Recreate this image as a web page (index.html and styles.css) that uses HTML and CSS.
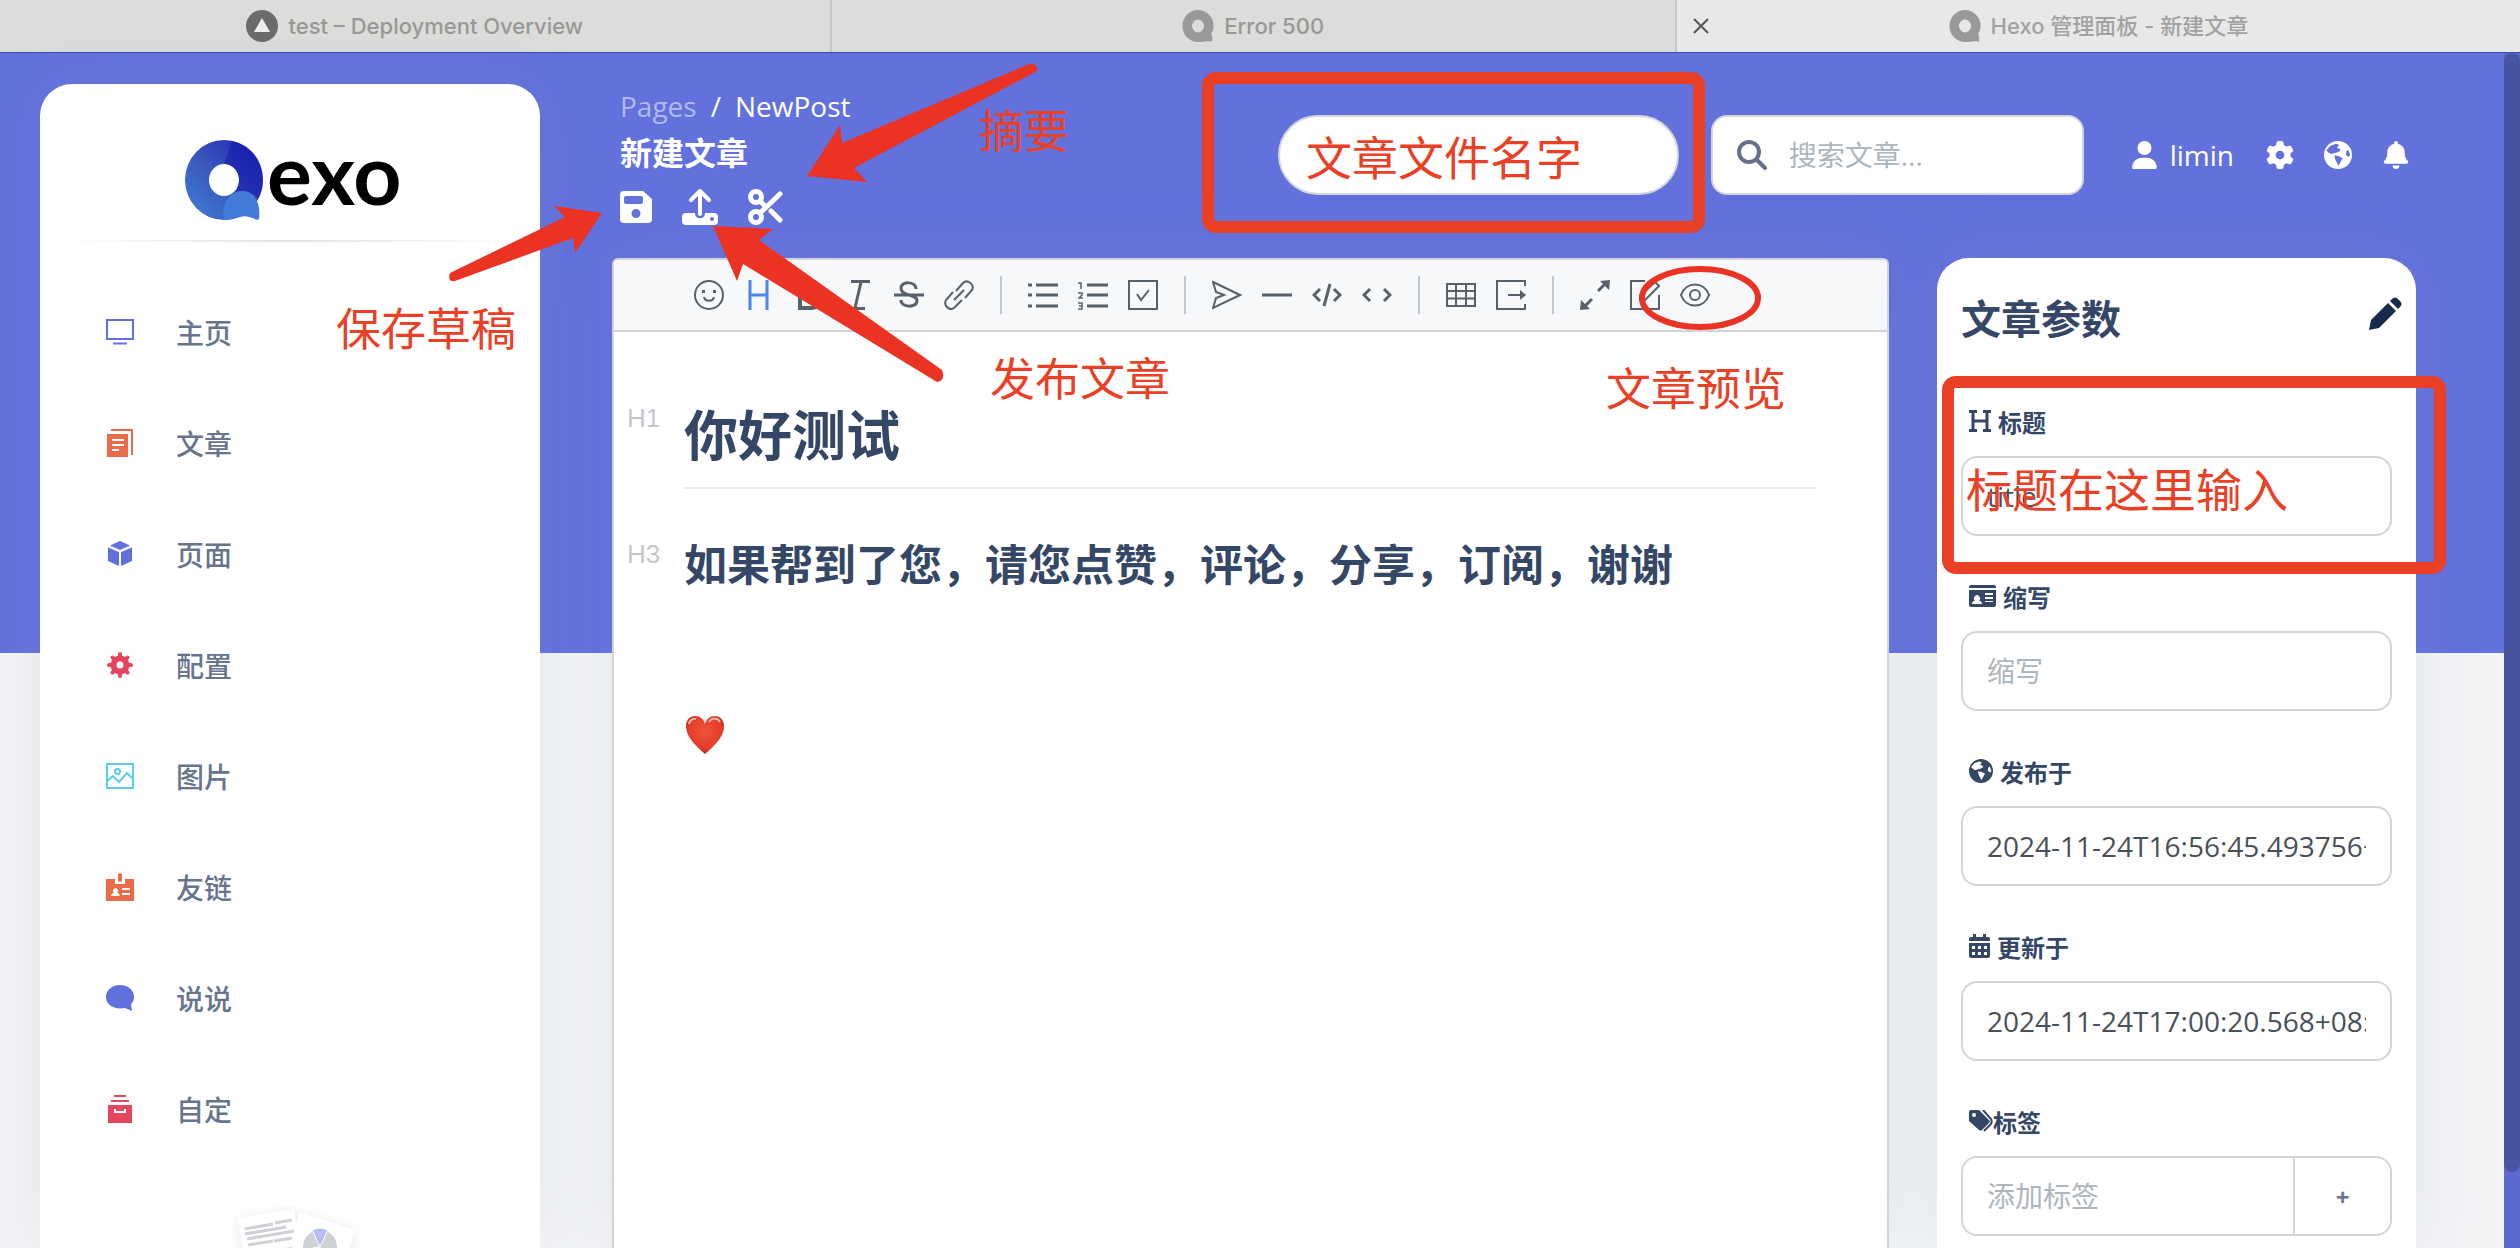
FILE: index.html
```html
<!DOCTYPE html>
<html lang="zh-CN">
<head>
    <meta charset="UTF-8">
    <meta name="viewport" content="width=device-width, initial-scale=1.0">
    <title>Hexo 管理面板 - 新建文章</title>
    <link rel="stylesheet" href="styles.css">
</head>
<body>
    <!-- shared icons -->
    <svg width="0" height="0" class="defs" aria-hidden="true">
        <linearGradient id="qRing" x1="0" y1="1" x2="1" y2="0">
            <stop offset="0" stop-color="#3f80d2"/>
            <stop offset="0.5" stop-color="#3a55bd"/>
            <stop offset="1" stop-color="#1a1fb0"/>
        </linearGradient>
        <symbol id="i-globe" viewBox="0 0 30 30">
            <path fill-rule="evenodd" d="M15 0a15 15 0 1 0 0 30a15 15 0 1 0 0-30zM2.500 10L7 5l6-2l3 1l-2 3.500l3.500 1l-.5 2.500l-4 1.500l-2.500 .5l-3 1l-3-2zM11 15.500l4.500 .5l4.500 2.500l-2 3.500l-2.500 4.500l-1.500-3l-2-4zM24 11l2-1.500l2 5.500l-1.500 2l-3-2z"/>
        </symbol>
        <symbol id="i-q" viewBox="0 0 78 80">
            <path fill-rule="evenodd" d="M39 0a39 40 0 1 0 0 80c12 0 20-4 35-1c2-8 0-15-2-20c4-6 6-12 6-19a39 40 0 0 0-39-40zM39 24a15 16 0 1 1 0 32a15 16 0 1 1 0-32z"/>
        </symbol>
    </svg>

    <div class="tabs">
        <div class="tab">
            <svg class="fav" viewBox="0 0 32 32"><circle cx="16" cy="16" r="16" fill="#6b6b6b"/><path d="M16 8l8 14H8z" fill="#efefef"/></svg>
            <span>test – Deployment Overview</span>
        </div>
        <div class="tab">
            <svg class="fav" fill="#999"><use href="#i-q"/></svg>
            <span>Error 500</span>
        </div>
        <div class="tab active">
            <button class="close" aria-label="关闭"><svg width="16" height="16" viewBox="0 0 16 16" stroke="#555" stroke-width="2"><path d="M1 1l14 14M15 1L1 15"/></svg></button>
            <svg class="fav" fill="#999"><use href="#i-q"/></svg>
            <span>Hexo 管理面板 - 新建文章</span>
        </div>
    </div>

    <div class="viewport">
        <aside class="sidebar">
            <a class="logo" href="#">
                <svg width="78" height="80" viewBox="0 0 78 80">
                    <path fill="url(#qRing)" fill-rule="evenodd" d="M39 0a39 40 0 1 0 0 80a39 40 0 1 0 0-80zM39 24a15 16 0 1 1 0 32a15 16 0 1 1 0-32z"/>
                    <path fill="#1217aa" d="M54 40c0-9-6-16-15-16l8-23c19 4 31 19 31 39c0 8-2 14-5 19c-3-5-9-8-17-8c-3 0-5 1-7 2c3-3 5-8 5-13z" opacity=".55"/>
                    <path fill="#427bd9" d="M39 80c-3-10 2-29 18-29c13 0 19 13 17 28c-3 3-9-5-19-2c-6 2-10 3-16 3z"/>
                </svg>
                <span>exo</span>
            </a>
            <hr>
            <nav>
                <a href="#"><svg viewBox="0 0 28 28" fill="none" stroke="#6070dc" stroke-width="2"><rect x="1" y="2" width="26" height="19"/><path d="M7 25.500h14"/></svg>主页</a>
                <a href="#"><svg viewBox="0 0 28 28" fill="#ea6b49"><path d="M5 0h22v26h-2V2H5z"/><path fill-rule="evenodd" d="M1 5h21v23H1zM6 10v2h12v-2zM6 15v2h12v-2zM6 20v2h7v-2z"/></svg>文章</a>
                <a href="#"><svg viewBox="0 0 28 28" fill="#6070dc"><path d="M14 1l10 4.500L14 10L4 5.500zM2 7.500l11 4.500v14L2 21zM26 7.500L15 12v14l11-5z"/></svg>页面</a>
                <a href="#"><svg viewBox="0 0 28 28" stroke="#e5465f" stroke-linecap="round"><circle cx="14" cy="14" r="6.500" fill="none" stroke-width="6"/><path stroke-width="4" d="M14 3v3M14 22v3M3 14h3M22 14h3M6.500 6.500l2 2M19.500 19.500l2 2M21.500 6.500l-2 2M8.500 19.500l-2 2"/></svg>配置</a>
                <a href="#"><svg viewBox="0 0 28 28" fill="none" stroke="#5ccbee" stroke-width="2"><rect x="1" y="2" width="26" height="24"/><circle cx="11.500" cy="9.500" r="2.500"/><path d="M1 19l6-5l6 6l8-9l6 6"/></svg>图片</a>
                <a href="#"><svg viewBox="0 0 28 28" fill="#ea6b49"><rect x="12" y="0" width="4" height="9" rx="2"/><path fill-rule="evenodd" d="M0 6h9v5h10V6h9v22H0zM16 15v2h8v-2zM16 20v2h8v-2zM5 23h9c0-2-2-3-3-3.300a2.500 2.500 0 1 0-3 0c-1 .3-3 1.300-3 3.300z"/></svg>友链</a>
                <a href="#"><svg viewBox="0 0 28 28" fill="#6070dc"><path d="M14 1c8 0 14 5 14 12c0 3-1 5-3 7l1 7l-7-3c-11 2-19-3-19-11C0 6 6 1 14 1z"/></svg>说说</a>
                <a href="#"><svg viewBox="0 0 28 28" fill="#e5465f"><path d="M8 0h12v2H8zM5 5h18v2H5z"/><path fill-rule="evenodd" d="M2 10h24v18H2zM8 14v4h12v-4h-2v2h-8v-2z"/></svg>自定</a>
            </nav>
            <svg class="docs" viewBox="0 0 160 80" width="160" height="80">
                <g fill="#fff" class="sheet"><path d="M38 12l56-9l12 77H48z"/><path d="M99 6l56 18l-18 60H80z"/></g>
                <g stroke="#d0d1d6" stroke-width="3"><path d="M45 23l28-5M75 17l17-3M45 28l41-7M47 33l47-8M48 39l25-4M74 35l18-3"/></g>
                <path fill="#d0d1d6" d="M60 43l7-1v38h-7zM86 42l6-1v39h-6z"/>
                <circle cx="120" cy="41" r="17" fill="#d0d1d6"/>
                <path d="M120 41l-8-17q8-4 16 0z" fill="#b7bdf2" stroke="#fff" stroke-width="1"/>
                <path d="M120 41l-17 4" stroke="#fff" stroke-width="2"/>
            </svg>
        </aside>

        <main>
            <header class="topbar">
                <div class="heading">
                    <div class="crumbs"><a href="#">Pages</a><span>/</span><span>NewPost</span></div>
                    <h2>新建文章</h2>
                    <div class="actions">
                        <button aria-label="保存草稿"><svg width="32" height="32" viewBox="0 0 32 32" fill="#fff"><path fill-rule="evenodd" d="M4 0h19l9 8v20a4 4 0 0 1-4 4H4a4 4 0 0 1-4-4V4a4 4 0 0 1 4-4zM6 5a2 2 0 0 0-2 2v4a2 2 0 0 0 2 2h15a2 2 0 0 0 2-2V7a2 2 0 0 0-2-2zM16 18a4.500 4.500 0 1 0 0 9a4.500 4.500 0 1 0 0-9z"/></svg></button>
                        <button aria-label="发布文章"><svg width="36" height="36" viewBox="0 0 36 36"><g fill="none" stroke="#fff" stroke-width="4" stroke-linecap="round" stroke-linejoin="round"><path d="M18 25V3M9 11l9-9l9 9"/></g><path fill="#fff" fill-rule="evenodd" d="M4 24h9c0 7 10 7 10 0h9a4 4 0 0 1 4 4v4a4 4 0 0 1-4 4H4a4 4 0 0 1-4-4v-4a4 4 0 0 1 4-4zM30 28a2 2 0 1 0 0 4a2 2 0 1 0 0-4z"/></svg></button>
                        <button aria-label="摘要"><svg width="36" height="36" viewBox="0 0 36 36" fill="none" stroke="#fff" stroke-width="5" stroke-linecap="round"><circle cx="8" cy="8" r="5.500"/><circle cx="8" cy="28" r="5.500"/><path d="M12 24L32 5M13 13l4 4M23 22l9 9"/></svg></button>
                    </div>
                </div>
                <div class="controls">
                    <input class="filename" type="text" aria-label="文件名">
                    <div class="search">
                        <svg width="30" height="30" viewBox="0 0 30 30" fill="none" stroke="#66708c" stroke-width="4" stroke-linecap="round"><circle cx="12" cy="12" r="10"/><path d="M20 20l8 8"/></svg>
                        <input type="text" placeholder="搜索文章..." aria-label="搜索文章">
                    </div>
                    <a class="user" href="#"><svg width="25" height="28" viewBox="0 0 448 512"><path d="M224 256A128 128 0 1 0 224 0a128 128 0 1 0 0 256zm-45.700 48C79.800 304 0 383.800 0 482.300C0 498.700 13.300 512 29.700 512H418.300c16.400 0 29.700-13.300 29.700-29.700C448 383.800 368.200 304 269.700 304H178.300z"/></svg>limin</a>
                    <div class="icons">
                        <button aria-label="设置"><svg width="28" height="28" viewBox="0 0 512 512"><path d="M495.900 166.600c3.200 8.700 .5 18.400-6.400 24.600l-43.300 39.400c1.100 8.300 1.700 16.800 1.700 25.400s-.6 17.100-1.700 25.400l43.300 39.400c6.900 6.200 9.600 15.900 6.400 24.600c-4.400 11.900-9.700 23.300-15.800 34.300l-4.700 8.100c-6.600 11-14 21.400-22.100 31.200c-5.900 7.200-15.700 9.600-24.500 6.800l-55.700-17.700c-13.400 10.300-28.200 18.900-44 25.400l-12.500 57.100c-2 9.100-9 16.300-18.200 17.800c-13.800 2.300-28 3.500-42.500 3.500s-28.700-1.200-42.500-3.500c-9.200-1.500-16.200-8.700-18.200-17.800l-12.500-57.100c-15.800-6.500-30.600-15.100-44-25.400L83.100 425.900c-8.800 2.800-18.600 .3-24.500-6.800c-8.100-9.800-15.500-20.200-22.100-31.200l-4.700-8.100c-6.100-11-11.400-22.400-15.800-34.300c-3.200-8.700-.5-18.400 6.400-24.600l43.300-39.400C64.600 273.100 64 264.600 64 256s.6-17.100 1.700-25.400L22.400 191.200c-6.900-6.200-9.600-15.900-6.400-24.600c4.400-11.900 9.700-23.300 15.800-34.300l4.700-8.100c6.600-11 14-21.400 22.100-31.200c5.900-7.200 15.700-9.600 24.500-6.800l55.700 17.700c13.400-10.300 28.200-18.900 44-25.400l12.500-57.100c2-9.100 9-16.300 18.200-17.800C227.300 1.200 241.500 0 256 0s28.700 1.200 42.500 3.500c9.200 1.500 16.200 8.700 18.200 17.800l12.500 57.100c15.800 6.500 30.600 15.100 44 25.400l55.700-17.700c8.800-2.800 18.600-.3 24.500 6.800c8.100 9.800 15.500 20.200 22.100 31.200l4.700 8.100c6.100 11 11.400 22.400 15.800 34.300zM256 336a80 80 0 1 0 0-160 80 80 0 1 0 0 160z"/></svg></button>
                        <button aria-label="语言"><svg width="28" height="28"><use href="#i-globe"/></svg></button>
                        <button aria-label="通知"><svg width="28" height="28" viewBox="-32 0 512 512"><path d="M224 0c-17.700 0-32 14.300-32 32V51.200C119 66 64 130.600 64 208v18.800c0 47-17.300 92.400-48.500 127.600l-7.400 8.300c-8.400 9.400-10.400 22.900-5.300 34.400S19.400 416 32 416H416c12.600 0 24-7.400 29.200-18.900s3.100-25-5.300-34.400l-7.400-8.300C401.300 319.200 384 273.900 384 226.800V208c0-77.400-55-142-128-156.800V32c0-17.700-14.300-32-32-32zm45.300 493.300c12-12 18.700-28.300 18.700-45.300H224 160c0 17 6.700 33.300 18.700 45.300s28.300 18.700 45.300 18.700s33.300-6.700 45.300-18.700z"/></svg></button>
                    </div>
                </div>
            </header>

            <div class="columns">
                <section class="editor">
                    <div class="toolbar">
                        <button aria-label="表情"><svg viewBox="0 0 30 30"><circle cx="15" cy="15" r="14"/><path d="M10 17c1 5 9 5 10 0"/><path class="solid" d="M8 10h3v3H8zM19 10h3v3h-3z"/></svg></button>
                        <button class="on" aria-label="标题"><svg viewBox="0 0 30 30"><path stroke-width="3" d="M6 0v30M23 0v30M6 15h17"/></svg></button>
                        <button aria-label="粗体"><svg viewBox="0 0 30 30"><path stroke-width="4" d="M6 2h11a6 6 0 0 1 0 12H6zM6 14h12a7 7 0 0 1 0 14H6z"/></svg></button>
                        <button aria-label="斜体"><svg viewBox="0 0 30 30"><path stroke-width="3" d="M7 1.500h19M4 28.500h17M17 2l-6 26"/></svg></button>
                        <button aria-label="删除线"><svg viewBox="0 0 30 30"><path stroke-width="3" d="M0 15h30M22 9c0-8-15-8-15-1c0 4 4 6 8 7s8 2 8 6c0 7-16 7-16-1"/></svg></button>
                        <button aria-label="链接"><svg viewBox="0 0 30 30"><path d="M12 11l7-8c4-4 12 1 9 7l-7 8M9 12l-7 8c-3 6 4 11 8 8l8-8M10 20L20 10"/></svg></button>
                        <i></i>
                        <button aria-label="列表"><svg viewBox="0 0 30 30"><path stroke-width="3" d="M8 5h22M8 15h22M8 26h22M0 5h4M0 15h4M0 26h4"/></svg></button>
                        <button aria-label="有序列表"><svg viewBox="0 0 30 30"><path stroke-width="3" d="M9 5h21M9 15h21M9 26h21"/><path stroke-width="1.500" d="M0 3h3v6M0 13h4v2l-3 3h4M0 23h4v6H0M1 26h3"/></svg></button>
                        <button aria-label="任务列表"><svg viewBox="0 0 30 30"><path d="M1 1h28v28H1zM9 14l4 6l8-10"/></svg></button>
                        <i></i>
                        <button aria-label="引用"><svg viewBox="0 0 30 30"><path d="M1 2l27 13L1 28l3-10l8-3l-8-3z"/></svg></button>
                        <button aria-label="分隔线"><svg viewBox="0 0 30 30"><path stroke-width="3" d="M0 15h30"/></svg></button>
                        <button aria-label="代码块"><svg viewBox="0 0 30 30"><path stroke-width="3" d="M8 9l-6 6l6 6M22 9l6 6l-6 6M18 4l-6 22"/></svg></button>
                        <button aria-label="行内代码"><svg viewBox="0 0 30 30"><path stroke-width="3" d="M8 9l-6 6l6 6M22 9l6 6l-6 6"/></svg></button>
                        <i></i>
                        <button aria-label="表格"><svg viewBox="0 0 30 30"><path d="M1 4h28v22H1zM1 11h28M1 18.500h28M10 4v22M20 4v22"/></svg></button>
                        <button aria-label="导出"><svg viewBox="0 0 30 30"><path d="M29 6V1H1v28h28v-5M12 15h15"/><path class="solid" d="M24 10l6 5l-6 5z"/></svg></button>
                        <i></i>
                        <button aria-label="全屏"><svg viewBox="0 0 30 30"><path stroke-width="3" d="M18 11l8-8M12 19l-8 8"/><path class="solid" d="M20 1l10-1l-1 10zM0 30l1-10l9 9z"/></svg></button>
                        <button aria-label="编辑"><svg viewBox="0 0 30 30"><path d="M15 1H1v28h28V15M10 16L25 2l4 4l-14 14h-5z"/></svg></button>
                        <button aria-label="预览"><svg viewBox="0 0 30 30"><path d="M1 15C6 1 24 1 29 15C24 29 6 29 1 15z"/><ellipse cx="15" cy="15" rx="5" ry="5"/></svg></button>
                    </div>
                    <div class="content">
                        <div class="row"><span class="marker">H1</span><h1>你好测试</h1></div>
                        <div class="row"><span class="marker">H3</span><h3>如果帮到了您，请您点赞，评论，分享，订阅，谢谢</h3></div>
                        <svg class="heart" width="40" height="40" viewBox="0 0 40 40">
                            <radialGradient id="heartFill" cx=".5" cy=".4" r=".65"><stop offset="0" stop-color="#f0543c"/><stop offset=".7" stop-color="#e23c2a"/><stop offset="1" stop-color="#a81c14"/></radialGradient>
                            <path fill="url(#heartFill)" d="M20 39C10 30 1 22 1 11C1 5 5 1 10 1c5 0 9 3 10 8c1-5 5-8 10-8c5 0 9 4 9 10c0 11-9 19-19 28z"/>
                            <path fill="none" stroke="#f9b3a8" stroke-width="2" d="M4 9c1-4 4-6 7-5M24 7c2-4 8-5 11 0"/>
                        </svg>
                    </div>
                </section>

                <form class="panel">
                    <div class="panel-head">
                        <h2>文章参数</h2>
                        <button type="button" aria-label="编辑参数"><svg width="34" height="34" viewBox="0 0 34 34" fill="#172b4d"><path d="M20 6l8 8L11 31L1 33l2-10zM22 4l2-2c2-2 4-2 6 0l2 2c2 2 2 4 0 6l-2 2z"/></svg></button>
                    </div>
                    <div class="field">
                        <label for="title"><svg width="22" height="22" viewBox="0 0 22 22" fill="none" stroke="#344767" stroke-width="3"><path d="M0 1.500h8M14 1.500h8M0 20.500h8M14 20.500h8M4 2v18M18 2v18M4 11h14"/></svg>标题</label>
                        <input id="title" type="text" value="title">
                    </div>
                    <div class="field">
                        <label for="abbr"><svg width="27" height="22" viewBox="0 0 27 22" fill="#344767"><path d="M2 0h23a2 2 0 0 1 2 2v1H0V2a2 2 0 0 1 2-2z"/><path fill-rule="evenodd" d="M0 5h27v15a2 2 0 0 1-2 2H2a2 2 0 0 1-2-2zM16 8v2h8V8zM16 12v2h8v-2zM16 16v1h8v-1zM3 19h10c0-2-1-3-3-3.500a3 3 0 1 0-4 0c-2 .5-3 1.500-3 3.500z"/></svg>缩写</label>
                        <input id="abbr" type="text" placeholder="缩写">
                    </div>
                    <div class="field">
                        <label for="published"><svg width="24" height="24" fill="#344767"><use href="#i-globe"/></svg>发布于</label>
                        <input id="published" type="text" value="2024-11-24T16:56:45.493756+08:00">
                    </div>
                    <div class="field">
                        <label for="updated"><svg width="21" height="24" viewBox="0 0 21 24" fill="#344767"><path d="M2 3h2V0h3v3h7V0h3v3h2a2 2 0 0 1 2 2v2H0V5a2 2 0 0 1 2-2z"/><path fill-rule="evenodd" d="M0 9h21v13a2 2 0 0 1-2 2H2a2 2 0 0 1-2-2zM3 12v3h3v-3zM9 12v3h3v-3zM15 12v3h3v-3zM3 18v3h3v-3zM9 18v3h3v-3zM15 18v3h3v-3z"/></svg>更新于</label>
                        <input id="updated" type="text" value="2024-11-24T17:00:20.568+08:00">
                    </div>
                    <div class="field">
                        <label class="tight" for="tag"><svg width="24" height="22" viewBox="0 0 24 22" fill="#344767"><path fill-rule="evenodd" d="M2 0h8l10 10c1 1 1 2 0 3l-7 7c-1 1-2 1-3 0L0 11V2a2 2 0 0 1 2-2zM5 3a2 2 0 1 0 0 4a2 2 0 1 0 0-4z"/><path fill="none" stroke="#344767" stroke-width="2" d="M14 0l8 9c1 2 1 3 0 5l-7 7"/></svg>标签</label>
                        <div class="group">
                            <input id="tag" type="text" placeholder="添加标签">
                            <button type="button">+</button>
                        </div>
                    </div>
                </form>
            </div>
        </main>
        <div class="scrollbar"><div class="thumb"></div></div>
    </div>

    <!-- hand-drawn notes on top of the page -->
    <div class="notes">
        <svg width="2520" height="1248" viewBox="0 0 2520 1248">
            <g fill="#ea3323">
                <path d="M602 213l-48-7l11 11L450 273q-3 9 5 8L573 238l2 15z"/>
                <path d="M807 176l33-51l2 18L1029 64q9-1 8 7L854 168l13 14z"/>
                <path d="M713 226l60 3l-14 11L942 370q4 10-5 12L743 264l-6 17z"/>
            </g>
            <ellipse cx="1700" cy="298" rx="58" ry="29" fill="none" stroke="#ea3323" stroke-width="6"/>
        </svg>
        <div class="frame frame-file"></div>
        <div class="frame frame-title"></div>
        <span class="note note-save">保存草稿</span>
        <span class="note note-summary">摘要</span>
        <span class="note note-publish">发布文章</span>
        <span class="note note-preview">文章预览</span>
        <span class="note note-file">文章文件名字</span>
        <span class="note note-title">标题在这里输入</span>
    </div>
</body>
</html>
```
FILE: styles.css
```css
* {
    box-sizing: border-box;
}
body {
    margin: 0;
    height: 100vh;
    overflow: hidden;
    position: relative;
    display: flex;
    flex-direction: column;
    font-family: "Open Sans", "Noto Sans CJK SC", sans-serif;
    font-size: 28px;
    color: #344767;
    background: #f3f4f6;
}
h1, h2, h3 {
    margin: 0;
    font-weight: 700;
}
a {
    color: inherit;
    text-decoration: none;
}
button {
    padding: 0;
    border: none;
    background: none;
    font: inherit;
    color: inherit;
    cursor: pointer;
}
svg {
    display: block;
    flex: none;
}
.defs {
    position: absolute;
}

/* browser tabs */
.tabs {
    display: flex;
    height: 53px;
    flex: none;
    border-bottom: 1px solid #3a4bb8;
    background: #dcdcda;
    font-family: Inter, "Noto Sans CJK SC", sans-serif;
    font-size: 22px;
    font-weight: 500;
    line-height: 32px;
    color: #989896;
}
.tab {
    flex: 1;
    display: flex;
    align-items: center;
    justify-content: center;
    gap: 10px;
    position: relative;
    border-right: 2px solid #c6c6c4;
}
.tab:first-child {
    flex: 0 0 33%;
}
.tab.active {
    background: #e8e8e8;
    border-right: none;
    color: #a2a2a2;
}
.fav {
    width: 32px;
    height: 32px;
}
.close {
    position: absolute;
    left: 16px;
}

/* page */
.viewport {
    flex: 1;
    min-height: 0;
    display: flex;
    background: linear-gradient(#6371dd 600px, #f3f4f6 600px);
}
.sidebar {
    width: 500px;
    flex: none;
    margin: 31px 72px 0 40px;
    border-radius: 32px 32px 0 0;
    background: #fff;
    box-shadow: 0 0 64px rgba(136, 152, 170, 0.15);
    overflow: hidden;
}
.logo {
    display: flex;
    align-items: flex-start;
    gap: 4px;
    height: 80px;
    margin: 56px 0 20px 145px;
    font-family: Lato, sans-serif;
    font-size: 84px;
    font-weight: 700;
    line-height: 66px;
    color: #000;
}
.sidebar hr {
    height: 2px;
    margin: 0 24px;
    border: none;
    background: linear-gradient(90deg, #fff, #e2e2e2, #fff);
}
.sidebar nav {
    padding-top: 34px;
}
.sidebar nav a {
    display: flex;
    align-items: center;
    gap: 42px;
    height: 111px;
    padding-left: 66px;
    font-weight: 500;
    color: #67748e;
}
.sidebar nav svg {
    width: 28px;
    height: 28px;
}
.docs {
    margin: 42px auto 0 160px;
}
.sheet {
    filter: drop-shadow(0 2px 6px rgba(0, 0, 0, 0.1));
}
main {
    flex: 1;
    min-width: 0;
    margin-right: 88px;
    display: flex;
    flex-direction: column;
}

/* top bar */
.topbar {
    display: flex;
    align-items: center;
    justify-content: space-between;
    height: 205px;
    flex: none;
    padding: 0 6px 2px 8px;
    color: #fff;
}
.crumbs {
    display: flex;
    gap: 14px;
    line-height: 42px;
}
.crumbs a {
    color: #b1b8ee;
}
.heading h2 {
    margin: 4px 0 14px;
    font-size: 32px;
    line-height: 44px;
}
.actions {
    display: flex;
    align-items: center;
    gap: 30px;
}
.controls, .user, .icons {
    display: flex;
    align-items: center;
}
.controls svg {
    fill: #fff;
}
.filename, .search {
    height: 80px;
    border: 2px solid #d2d6da;
    background: #fff;
}
.filename {
    width: 401px;
    margin-right: 32px;
    padding: 0 24px;
    border-radius: 40px;
    font: inherit;
}
.search {
    display: flex;
    align-items: center;
    gap: 22px;
    width: 373px;
    margin-right: 48px;
    padding: 0 24px;
    border-radius: 16px;
}
.controls .search svg {
    fill: none;
}
.search input {
    width: 100%;
    padding: 0;
    border: none;
    outline: none;
    font: inherit;
}
input::placeholder {
    color: #adb5bd;
    opacity: 1;
}
.user {
    gap: 13px;
    margin-right: 32px;
}
.icons {
    gap: 30px;
}

/* editor */
.columns {
    flex: 1;
    min-height: 0;
    display: flex;
    gap: 48px;
}
.editor {
    flex: 1;
    min-width: 0;
    border: 2px solid #d1d5da;
    border-bottom: none;
    border-radius: 6px 6px 0 0;
    background: #fff;
    box-shadow: 0 0 64px rgba(136, 152, 170, 0.15);
}
.toolbar {
    display: flex;
    align-items: center;
    height: 72px;
    padding-left: 70px;
    border-bottom: 2px solid #d1d5da;
    border-radius: 4px 4px 0 0;
    background: #f6f8fa;
    color: #586069;
}
.toolbar button {
    padding: 0 10px;
}
.toolbar .on {
    color: #4c85f0;
}
.toolbar svg {
    width: 30px;
    height: 30px;
    fill: none;
    stroke: currentColor;
    stroke-width: 2;
}
.toolbar .solid {
    fill: currentColor;
    stroke: none;
}
.toolbar i {
    width: 2px;
    height: 38px;
    margin: 0 16px;
    background: #c4c7cc;
}
.content {
    padding: 67px 70px 0 13px;
}
.row {
    display: flex;
    margin-bottom: 46px;
}
.marker {
    width: 57px;
    flex: none;
    font-family: "Liberation Sans", sans-serif;
    font-size: 26px;
    line-height: 38px;
    color: #c6c7cc;
}
.row h1 {
    flex: 1;
    padding-bottom: 16px;
    border-bottom: 2px solid #eaecef;
    font-size: 54px;
    line-height: 72px;
}
.row h3 {
    font-size: 43px;
    line-height: 60px;
    white-space: nowrap;
}
.heart {
    margin: 120px 0 0 58px;
}

/* article settings */
.panel {
    width: 479px;
    flex: none;
    padding: 30px 24px 0;
    border-radius: 32px 32px 0 0;
    background: #fff;
    box-shadow: 0 0 64px rgba(136, 152, 170, 0.15);
    overflow: hidden;
}
.panel-head {
    display: flex;
    align-items: center;
    justify-content: space-between;
    height: 58px;
    margin-bottom: 56px;
    padding-right: 6px;
}
.panel-head button {
    align-self: flex-start;
    padding-top: 9px;
    margin-right: -16px;
}
.panel-head h2 {
    font-size: 40px;
}
.field {
    margin-bottom: 41px;
}
.field label {
    display: flex;
    align-items: center;
    gap: 7px;
    height: 38px;
    margin-bottom: 16px;
    padding-left: 8px;
    font-size: 24px;
    font-weight: 700;
}
.field .tight {
    gap: 0;
}
.field input {
    width: 100%;
    height: 80px;
    padding: 0 24px;
    border: 2px solid #d2d6da;
    border-radius: 16px;
    background: #fff;
    font: inherit;
    color: #495057;
}
.group {
    display: flex;
}
.field .group input {
    flex: 1;
    min-width: 0;
    border-right: none;
    border-radius: 16px 0 0 16px;
}
.group button {
    width: 99px;
    border: 2px solid #d2d6da;
    border-radius: 0 16px 16px 0;
    font-size: 24px;
    font-weight: 700;
    color: #67748e;
}
.scrollbar {
    width: 16px;
    flex: none;
    background: #5d69cf;
}
.thumb {
    height: 1119px;
    border-radius: 8px;
    background: #4853a1;
}

/* notes */
.notes {
    position: absolute;
    inset: 0;
    overflow: hidden;
    pointer-events: none;
}
.note {
    position: absolute;
    font-size: 45px;
    line-height: 62px;
    white-space: nowrap;
    color: #ea4026;
}
.note-save {
    left: 336px;
    top: 298px;
}
.note-summary {
    left: 979px;
    top: 100px;
}
.note-publish {
    left: 990px;
    top: 348px;
}
.note-preview {
    left: 1606px;
    top: 358px;
}
.note-file {
    left: 1306px;
    top: 126px;
}
.note-title {
    left: 1966px;
    top: 458px;
}
.note-file, .note-title {
    font-size: 46px;
}
.frame {
    position: absolute;
    border: 12px solid #ea4026;
    border-radius: 14px;
}
.frame-file {
    left: 1202px;
    top: 72px;
    width: 503px;
    height: 161px;
}
.frame-title {
    left: 1942px;
    top: 376px;
    width: 504px;
    height: 198px;
}
```
